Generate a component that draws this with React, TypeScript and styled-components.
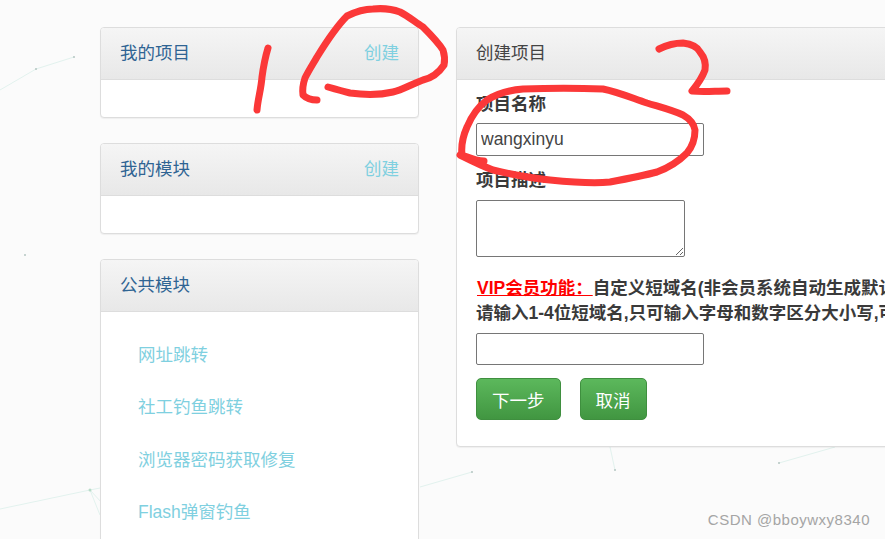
import styled, { createGlobalStyle } from 'styled-components'

const modules = ['网址跳转', '社工钓鱼跳转', '浏览器密码获取修复', 'Flash弹窗钓鱼']

export default function App() {
  return (
    <>
      <GlobalStyle />
      <Page>
        <Backdrop viewBox="0 0 885 539">
          <g stroke="#e2f2ee" strokeWidth="1" fill="none">
            <path d="M0 90 L36 69 L74 57" />
            <path d="M0 509 L90 490 L100 488" />
            <path d="M90 490 L100 515 M90 490 L102 503" />
            <path d="M420 487 L472 472" />
            <path d="M610 447 L615 470" />
            <path d="M779 463 L835 447" />
          </g>
          <g fill="#b5c6c2">
            <circle cx="36" cy="69" r="1" />
            <circle cx="74" cy="57" r="1" />
            <circle cx="25" cy="255" r="1" />
            <circle cx="472" cy="472" r="1" />
            <circle cx="615" cy="470" r="1" />
            <circle cx="779" cy="463" r="1" />
          </g>
          <circle cx="90" cy="490" r="1.5" fill="#b9dcc8" />
        </Backdrop>

        <Columns>
          <Sidebar>
            <Panel>
              <PanelHeader>
                <SideTitle>我的项目</SideTitle>
                <CreateLink>创建</CreateLink>
              </PanelHeader>
              <EmptyBody />
            </Panel>
            <Panel>
              <PanelHeader>
                <SideTitle>我的模块</SideTitle>
                <CreateLink>创建</CreateLink>
              </PanelHeader>
              <EmptyBody />
            </Panel>
            <Panel>
              <PanelHeader>
                <SideTitle>公共模块</SideTitle>
              </PanelHeader>
              <ModuleList>
                {modules.map((name) => (
                  <ModuleItem key={name}>{name}</ModuleItem>
                ))}
              </ModuleList>
            </Panel>
          </Sidebar>

          <MainPanel>
            <PanelHeader>
              <MainTitle>创建项目</MainTitle>
            </PanelHeader>
            <Form>
              <Label>项目名称</Label>
              <TextInput defaultValue="wangxinyu" />
              <DescLabel>项目描述</DescLabel>
              <TextArea />
              <Notice>
                <VipTag>VIP会员功能：</VipTag>自定义短域名(非会员系统自动生成默认短域名)
              </Notice>
              <Notice>请输入1-4位短域名,只可输入字母和数字区分大小写,可</Notice>
              <DomainInput />
              <Actions>
                <GreenButton type="button">下一步</GreenButton>
                <GreenButton type="button">取消</GreenButton>
              </Actions>
            </Form>
          </MainPanel>
        </Columns>

        <Scribble viewBox="0 0 885 539">
          <g stroke="#fb3838" strokeWidth="7" fill="none" strokeLinecap="round" strokeLinejoin="round">
            <path d="M268 48 C265 58 264 62 262 77 C261 90 258 98 257 110" />
            <path d="M317 100 C310 100 306 98 303 95 C302 88 303 84 305 78 C309 70 313 64 317 57 C325 44 335 28 347 16 C355 12 364 9 373 9 C383 8 392 9 400 12 C408 16 415 22 423 27 C431 35 438 42 443 50 C445 56 445 60 444 65 C438 74 432 78 423 80 C412 84 402 90 393 92 C380 95 365 95 350 93 C342 91 335 89 328 87" />
            <path d="M659 49 C667 45 675 43 683 43 C692 44 698 48 700 52 C705 58 706 64 705 70 C702 78 697 85 692 91 C703 92 715 91 727 91" />
            <path d="M484 161 C476 161 470 158 462 155 C461 146 463 136 467 127 C472 115 479 106 487 100 C498 93 510 90 523 89 C550 88 578 88 603 89 C618 92 632 98 647 103 C660 107 672 110 683 115 C690 119 694 124 695 130 C695 138 692 147 687 153 C678 162 668 168 657 172 C642 176 626 179 610 182 C590 184 570 182 550 180 C530 178 510 174 493 170 C482 166 470 160 460 155" />
          </g>
        </Scribble>

        <Watermark>CSDN @bboywxy8340</Watermark>
      </Page>
    </>
  )
}

const GlobalStyle = createGlobalStyle`
  html, body {
    margin: 0;
    padding: 0;
    background: #fbfbfb;
  }

  * {
    box-sizing: border-box;
  }
`

const Page = styled.div`
  position: relative;
  width: 885px;
  height: 539px;
  overflow: hidden;
  font-family: "Liberation Sans", "Noto Sans CJK SC", sans-serif;
  font-size: 18px;
  color: #333;
`

const Backdrop = styled.svg`
  position: absolute;
  inset: 0;
  width: 885px;
  height: 539px;
`

const Scribble = styled(Backdrop)`
  pointer-events: none;
`

const Columns = styled.div`
  position: relative;
  display: flex;
  align-items: flex-start;
  gap: 37px;
  padding: 27px 0 0 100px;
`

const Sidebar = styled.div`
  display: flex;
  flex-direction: column;
  flex: 0 0 319px;
  gap: 25px;
`

const Panel = styled.section`
  background: #fff;
  border: 1px solid #ddd;
  border-radius: 4px;
  box-shadow: 0 1px 1px rgba(0, 0, 0, 0.05);
  overflow: hidden;
`

const MainPanel = styled(Panel)`
  flex: 0 0 470px;
  height: 420px;
`

const PanelHeader = styled.header`
  display: flex;
  align-items: center;
  justify-content: space-between;
  height: 52px;
  padding: 0 19px 5px 19px;
  background: linear-gradient(to bottom, #f5f5f5, #e8e8e8);
  border-bottom: 1px solid #ddd;
`

const SideTitle = styled.h3`
  margin: 0;
  font-size: 17.5px;
  font-weight: 400;
  color: #2f6493;
`

const MainTitle = styled(SideTitle)`
  color: #444;
`

const CreateLink = styled.a`
  font-size: 17.5px;
  color: #7fd0e0;
`

const EmptyBody = styled.div`
  height: 37px;
`

const ModuleList = styled.ul`
  list-style: none;
  margin: 0;
  padding: 17px 0 0 37px;
  height: 260px;
`

const ModuleItem = styled.li`
  height: 52.3px;
  line-height: 52.3px;
  font-size: 17.5px;
  color: #7fd0e0;
`

const Form = styled.form`
  display: flex;
  flex-direction: column;
  align-items: flex-start;
  padding: 12px 19px 0;
`

const Label = styled.label`
  font-size: 17.5px;
  line-height: 24px;
  font-weight: 700;
  color: #3a3a3a;
`

const DescLabel = styled(Label)`
  margin-top: 12px;
`

const TextInput = styled.input`
  width: 228px;
  height: 33px;
  margin-top: 7px;
  padding: 0 4px;
  border: 1px solid #767676;
  border-radius: 2px;
  background: #fff;
  font-family: inherit;
  font-size: 17.5px;
  color: #444;
  outline: none;
`

const TextArea = styled.textarea`
  display: block;
  width: 209px;
  height: 57px;
  margin-top: 8px;
  border: 1px solid #767676;
  border-radius: 2px;
  background: #fff;
  outline: none;
`

const Notice = styled.p`
  margin: 0;
  width: 460px;
  white-space: nowrap;
  font-size: 17.5px;
  line-height: 25px;
  font-weight: 700;
  color: #3a3a3a;

  &:first-of-type {
    margin-top: 19px;
  }
`

const VipTag = styled.span`
  color: #f00;
  text-decoration: underline;
  margin-left: 1px;
`

const DomainInput = styled(TextInput)`
  height: 32px;
  margin-top: 7px;
`

const Actions = styled.div`
  display: flex;
  gap: 19px;
  margin-top: 13px;
`

const GreenButton = styled.button`
  height: 42px;
  padding: 0 15px;
  border: 1px solid #3f8f3f;
  border-radius: 5px;
  background: linear-gradient(to bottom, #5cb85c, #419641);
  font-family: inherit;
  font-size: 17.5px;
  color: #fff;
`

const Watermark = styled.div`
  position: absolute;
  right: 15px;
  bottom: 11px;
  font-size: 15px;
  letter-spacing: 0.5px;
  color: #a5a5a5;
`
